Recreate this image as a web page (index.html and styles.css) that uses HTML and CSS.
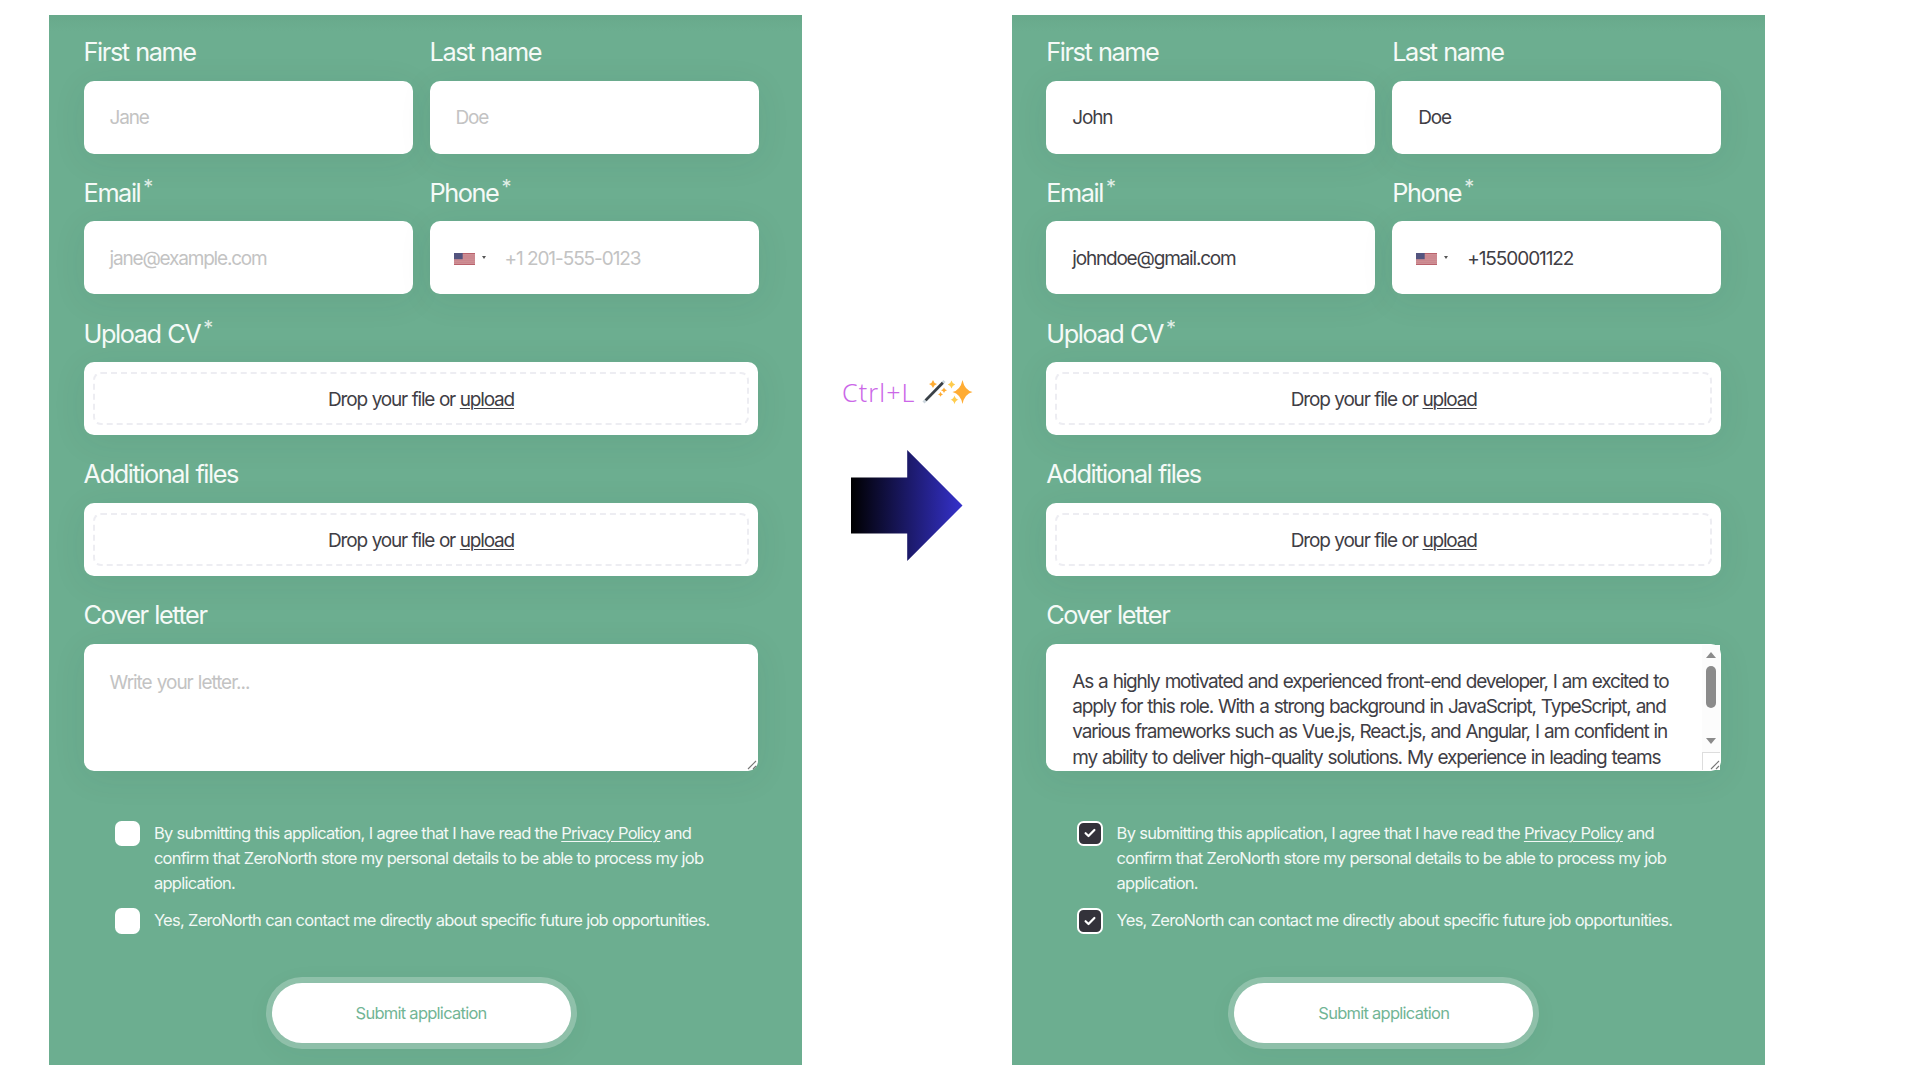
FILE: index.html
```html
<!DOCTYPE html>
<html lang="en">
<head>
<meta charset="utf-8">
<title>Application form autofill</title>
<link rel="stylesheet" href="styles.css">
</head>
<body>
<svg class="defs" width="0" height="0" aria-hidden="true">
  <symbol id="flag" viewBox="0 0 21 12">
    <rect width="21" height="12" fill="#cf8f95"/>
    <path d="M0 .5h21M0 11.5h21" stroke="#b9626c" stroke-width="1"/>
    <path d="M9 3h12M9 5h12M0 7.3h21M0 9.4h21" stroke="#c67e86" stroke-width=".6"/>
    <rect width="8.7" height="6.2" fill="#53547f"/>
  </symbol>
  <symbol id="grip" viewBox="0 0 10 10">
    <path d="M1 9 9 1M6 9l3-3" stroke="#777" stroke-width="1.1" fill="none"/>
  </symbol>
  <symbol id="check" viewBox="0 0 12 10">
    <path d="M1.6 5.2 4.5 8 10.4 2" stroke="#fff" stroke-width="2.2" fill="none" stroke-linecap="round" stroke-linejoin="round"/>
  </symbol>
</svg>
<main class="stage">
  <form class="panel">
    <div class="row">
      <div class="field"><label>First name</label><div class="box hint">Jane</div></div>
      <div class="field"><label>Last name</label><div class="box hint">Doe</div></div>
    </div>
    <div class="row">
      <div class="field"><label>Email<sup>*</sup></label><div class="box low hint">jane@example.com</div></div>
      <div class="field"><label>Phone<sup>*</sup></label><div class="box low phone hint"><svg class="flag"><use href="#flag"/></svg><i class="caret"></i><span>+1 201-555-0123</span></div></div>
    </div>
    <div class="field"><label>Upload CV<sup>*</sup></label><div class="box drop"><div class="zone">Drop your file or <u>upload</u></div></div></div>
    <div class="field"><label>Additional files</label><div class="box drop"><div class="zone">Drop your file or <u>upload</u></div></div></div>
    <div class="field"><label>Cover letter</label><div class="box letter hint">Write your letter...<svg class="grip"><use href="#grip"/></svg></div></div>
    <div class="consents">
      <div class="consent"><span class="tick"></span><p>By submitting this application, I agree that I have read the <u>Privacy Policy</u> and<br>confirm that ZeroNorth store my personal details to be able to process my job<br>application.</p></div>
      <div class="consent"><span class="tick"></span><p>Yes, ZeroNorth can contact me directly about specific future job opportunities.</p></div>
    </div>
    <button class="submit" type="button">Submit application</button>
  </form>

  <div class="middle">
    <div class="shortcut"><span>Ctrl+L</span>
      <svg class="magic" viewBox="0 0 52 26">
        <path d="M1.500 23.500 22.500 2" stroke="#ccd6dd" stroke-width="3"/>
        <path d="M3.600 21.400 20.800 3.800" stroke="#3a4046" stroke-width="2.700"/>
        <g fill="#ffac33">
          <path d="M11 1Q11.800 4.200 15 5 11.800 5.800 11 9 10.200 5.800 7 5 10.200 4.200 11 1Z"/>
          <path d="M22 8.500Q22.500 10.800 25 11.300 22.500 11.800 22 14 21.500 11.800 19 11.300 21.500 10.800 22 8.500Z"/>
          <path d="M18.500 12.800Q19 14.900 21 15.400 19 15.900 18.500 17.800 18 15.900 16 15.400 18 14.900 18.500 12.800Z"/>
          <path d="M40.500 1Q42.500 11 50.500 13 42.500 15 40.500 25 38.500 15 30.500 13 38.500 11 40.500 1Z"/>
        </g>
        <g fill="#ffcc4d">
          <path d="M29.500 1.500Q30.300 4.700 33.200 5.500 30.300 6.300 29.500 9.500 28.700 6.300 25.800 5.500 28.700 4.700 29.500 1.500Z"/>
          <path d="M32.500 16.500Q33.300 20 36.500 20.800 33.300 21.600 32.500 25.200 31.700 21.600 28.500 20.800 31.700 20 32.500 16.500Z"/>
        </g>
      </svg>
    </div>
    <svg class="arrow" viewBox="0 0 112 112">
      <defs><linearGradient id="ink"><stop offset="0" stop-color="#000"/><stop offset="1" stop-color="#3531cc"/></linearGradient></defs>
      <path d="M0 27.500H56.200V0L111.500 55.500 56.200 111V83.500H0Z" fill="url(#ink)"/>
    </svg>
  </div>

  <form class="panel">
    <div class="row">
      <div class="field"><label>First name</label><div class="box">John</div></div>
      <div class="field"><label>Last name</label><div class="box">Doe</div></div>
    </div>
    <div class="row">
      <div class="field"><label>Email<sup>*</sup></label><div class="box low">johndoe@gmail.com</div></div>
      <div class="field"><label>Phone<sup>*</sup></label><div class="box low phone"><svg class="flag"><use href="#flag"/></svg><i class="caret"></i><span>+1550001122</span></div></div>
    </div>
    <div class="field"><label>Upload CV<sup>*</sup></label><div class="box drop"><div class="zone">Drop your file or <u>upload</u></div></div></div>
    <div class="field"><label>Additional files</label><div class="box drop"><div class="zone">Drop your file or <u>upload</u></div></div></div>
    <div class="field"><label>Cover letter</label><div class="box letter filled"><div class="text">As a highly motivated and experienced front-end developer, I am excited to<br>apply for this role. With a strong background in JavaScript, TypeScript, and<br>various frameworks such as Vue.js, React.js, and Angular, I am confident in<br>my ability to deliver high-quality solutions. My experience in leading teams</div>
      <div class="scroll"><i class="up"></i><i class="thumb"></i><i class="down"></i><span class="corner"></span></div><svg class="grip"><use href="#grip"/></svg></div></div>
    <div class="consents">
      <div class="consent"><span class="tick on"><svg><use href="#check"/></svg></span><p>By submitting this application, I agree that I have read the <u>Privacy Policy</u> and<br>confirm that ZeroNorth store my personal details to be able to process my job<br>application.</p></div>
      <div class="consent"><span class="tick on"><svg><use href="#check"/></svg></span><p>Yes, ZeroNorth can contact me directly about specific future job opportunities.</p></div>
    </div>
    <button class="submit" type="button">Submit application</button>
  </form>
</main>
</body>
</html>
```

FILE: styles.css
```css
* { box-sizing: border-box; }

body {
  margin: 0;
  background: #fff;
  font-family: Inter, "Liberation Sans", sans-serif;
  overflow: hidden;
}

.defs { display: block; position: absolute; }

.stage {
  display: flex;
  height: 1080px;
  padding: 15px 0 15px 49.3px;
}

.panel {
  display: flex;
  flex-direction: column;
  flex: none;
  width: 752.7px;
  height: 1050px;
  padding: 21.550px 43.5px 0 34.300px;
  overflow: hidden;
  color: #fff;
  background: linear-gradient(#68a98b, #6cae90 16px);
}

.row { display: flex; gap: 17px; }
.row .field { flex: 1; }

.field { margin-bottom: 23.900px; }

label {
  display: block;
  height: 30px;
  margin-bottom: 14px;
  font-size: 25.3px;
  line-height: 30.800px;
  letter-spacing: -1.420px;
  word-spacing: 0.900px;
  white-space: nowrap;
  color: #f5faf7;
}

sup {
  display: inline-block;
  margin-left: 3px;
  font-size: 20px;
  line-height: 1;
  vertical-align: 8px;
  opacity: 0.85;
}

.box {
  position: relative;
  display: flex;
  align-items: center;
  height: 73px;
  padding: 0 26px;
  border-radius: 10px;
  background: #fff;
  box-shadow: 0 6px 34px rgba(40, 80, 60, 0.08);
  color: #3f3e45;
  font-size: 19px;
  letter-spacing: -1.190px;
  word-spacing: 0.900px;
  white-space: nowrap;
}

.hint { color: #c3c3c3; }
.low { padding-top: 1.500px; }

.phone { padding-left: 24px; letter-spacing: -1.080px; word-spacing: 0; }
.flag { width: 21px; height: 12px; }

.caret {
  width: 0;
  margin: -2px 0 0 7px;
  border: 2.500px solid transparent;
  border-top: 3.500px solid #555;
  border-bottom: 0;
}

.phone span { margin-left: 19px; }

.drop { padding: 10px 9px; }

.zone {
  display: flex;
  flex: 1;
  align-items: center;
  justify-content: center;
  height: 53px;
  padding-top: 1.500px;
  border: 2px dashed #ededf2;
  border-radius: 8px;
  letter-spacing: -1.200px;
  word-spacing: 0.600px;
  white-space: pre;
}

u { text-underline-offset: 2px; text-decoration-thickness: 1px; }

.letter {
  align-items: flex-start;
  height: 127px;
  padding-top: 26px;
  line-height: 25.3px;
}

.letter.hint { letter-spacing: -1.050px; }
.letter.filled { padding-top: 24.5px; }
.text { height: 102px; margin-right: -8px; padding-right: 4px; overflow: hidden; }

.grip {
  position: absolute;
  right: 1px;
  bottom: 1px;
  width: 10px;
  height: 10px;
}

.scroll {
  position: absolute;
  top: 1px;
  right: 1px;
  bottom: 1px;
  display: flex;
  flex-direction: column;
  align-items: center;
  width: 18px;
  padding-top: 7px;
  background: #fcfcfc;
}

.up, .down { border: 5.500px solid transparent; }
.up { border-top: 0; border-bottom: 6px solid #8b8b8b; }
.down { margin-top: 30px; border-bottom: 0; border-top: 6px solid #8b8b8b; }
.thumb { width: 10.500px; height: 42px; margin-top: 8px; border-radius: 5px; background: #8b8b8b; }

.corner {
  width: 18px;
  height: 18px;
  margin-top: auto;
  border: 1px solid #ddd;
  border-width: 1px 0 0 1px;
  background: #fff;
}

.consents {
  display: flex;
  flex-direction: column;
  gap: 11.800px;
  margin: 25.800px 0 0 31px;
}

.consent { display: flex; gap: 14px; }

.consent p {
  margin: 0;
  font-size: 16.500px;
  line-height: 25.300px;
  letter-spacing: -0.740px;
  word-spacing: 0.150px;
  white-space: nowrap;
  color: #f2f8f5;
}

.tick {
  display: flex;
  align-items: center;
  justify-content: center;
  flex: none;
  width: 25.300px;
  height: 25.300px;
  border-radius: 6.500px;
  background: #fff;
}

.tick.on { border: 2px solid #fff; background: #33323a; }
.tick svg { width: 12px; height: 10px; }

.submit {
  width: 299px;
  height: 60px;
  margin: 49px 0 0 188px;
  padding: 0;
  border: 0;
  border-radius: 30px;
  background: #fff;
  box-shadow: 0 0 0 6px rgba(255, 255, 255, 0.25), 0 6px 30px rgba(40, 80, 60, 0.07);
  color: #72b595;
  font: 16.500px Inter, sans-serif;
  letter-spacing: -0.740px;
}

.middle {
  display: flex;
  flex-direction: column;
  flex: none;
  width: 210px;
  padding: 359px 0 0 40px;
}

.shortcut { display: flex; align-items: center; gap: 4px; height: 36px; }

.shortcut span {
  width: 76px;
  font: 300 25px "Noto Sans", sans-serif;
  letter-spacing: 1.100px;
  white-space: nowrap;
  color: #cb67e8;
}

.magic { width: 52px; height: 26px; }
.arrow { width: 112px; height: 112px; margin: 40px 0 0 9px; }
```
